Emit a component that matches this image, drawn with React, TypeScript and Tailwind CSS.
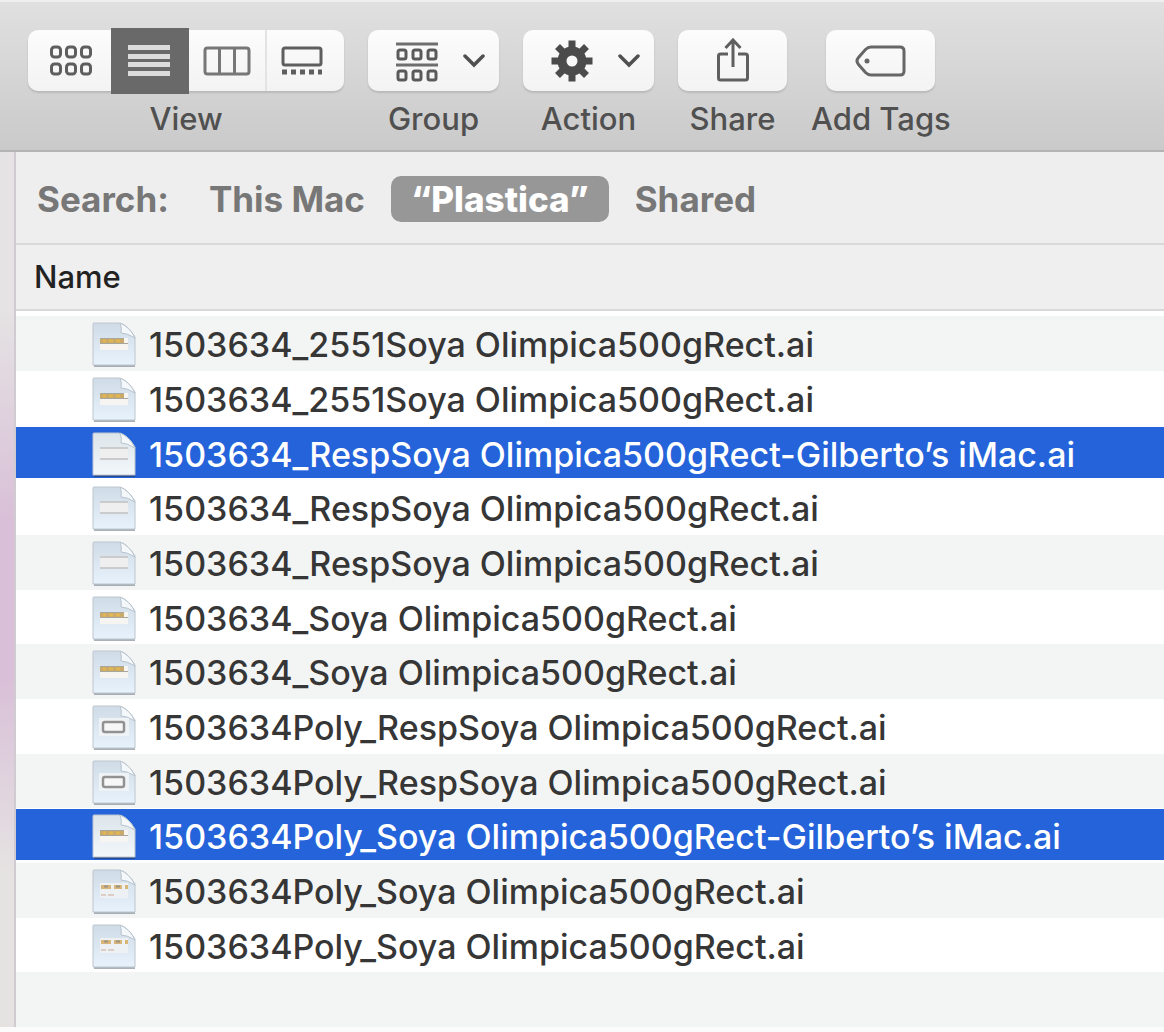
import { useState } from "react";
import type { ReactNode } from "react";

type Preview = "label" | "plain" | "frame" | "dashes";

const files: { name: string; preview: Preview; selected?: boolean }[] = [
  { name: "1503634_2551Soya Olimpica500gRect.ai", preview: "label" },
  { name: "1503634_2551Soya Olimpica500gRect.ai", preview: "label" },
  { name: "1503634_RespSoya Olimpica500gRect-Gilberto’s iMac.ai", preview: "plain", selected: true },
  { name: "1503634_RespSoya Olimpica500gRect.ai", preview: "plain" },
  { name: "1503634_RespSoya Olimpica500gRect.ai", preview: "plain" },
  { name: "1503634_Soya Olimpica500gRect.ai", preview: "label" },
  { name: "1503634_Soya Olimpica500gRect.ai", preview: "label" },
  { name: "1503634Poly_RespSoya Olimpica500gRect.ai", preview: "frame" },
  { name: "1503634Poly_RespSoya Olimpica500gRect.ai", preview: "frame" },
  { name: "1503634Poly_Soya Olimpica500gRect-Gilberto’s iMac.ai", preview: "label", selected: true },
  { name: "1503634Poly_Soya Olimpica500gRect.ai", preview: "dashes" },
  { name: "1503634Poly_Soya Olimpica500gRect.ai", preview: "dashes" },
];

function IconView() {
  return (
    <svg width="44" height="32" viewBox="0 0 44 32" fill="none" stroke="#5e5e5e" strokeWidth="3" aria-hidden="true">
      {[2, 19].map((y) =>
        [2.5, 17.5, 32.5].map((x) => <rect key={`${x}-${y}`} x={x} y={y} width="9" height="10" rx="3" />),
      )}
    </svg>
  );
}

function ListView() {
  return (
    <svg width="42" height="34" viewBox="0 0 42 34" fill="#dcdcdc" aria-hidden="true">
      {[1, 10, 18, 27].map((y) => (
        <rect key={y} x="0" y={y} width="42" height="5" />
      ))}
    </svg>
  );
}

function ColumnView() {
  return (
    <svg width="48" height="30" viewBox="0 0 48 30" fill="none" stroke="#777777" strokeWidth="3" aria-hidden="true">
      <rect x="2" y="2" width="44" height="26" rx="2.5" />
      <path d="M16.5 2v26M31.5 2v26" />
    </svg>
  );
}

function GalleryView() {
  return (
    <svg width="42" height="30" viewBox="0 0 42 30" fill="none" stroke="#5e5e5e" strokeWidth="3" aria-hidden="true">
      <rect x="2" y="2" width="38" height="17" rx="2" />
      <path d="M1 26h5M10 26h5M19 26h5M28 26h5M37 26h4" strokeWidth="5" />
    </svg>
  );
}

function GroupIcon() {
  return (
    <svg width="42" height="42" viewBox="0 0 42 42" fill="none" stroke="#5a5a5a" strokeWidth="3" aria-hidden="true">
      <path d="M0 4h42M0 25h42" stroke="#6e6e6e" />
      {[10, 31].map((y) =>
        [2, 17, 32].map((x) => <rect key={`${x}-${y}`} x={x} y={y} width="8" height="9" rx="2" />),
      )}
    </svg>
  );
}

function GearIcon() {
  return (
    <svg width="42" height="42" viewBox="-21 -21 42 42" fill="none" stroke="#4b4b4b" aria-hidden="true">
      <circle r="10" strokeWidth="9" />
      {[0, 45, 90, 135].map((a) => (
        <path key={a} d="M0 -20.5V-12M0 20.5V12" strokeWidth="7" transform={`rotate(${a})`} />
      ))}
    </svg>
  );
}

function Chevron() {
  return (
    <svg width="22" height="14" viewBox="0 0 22 14" fill="none" stroke="#505050" strokeWidth="3.5" strokeLinecap="round" aria-hidden="true">
      <path d="M2 2l9 9 9-9" />
    </svg>
  );
}

function ShareIcon() {
  return (
    <svg width="34" height="46" viewBox="0 0 34 46" fill="none" stroke="#5f5f5f" strokeWidth="3" aria-hidden="true">
      <path d="M12 16H4.5Q2.5 16 2.5 18V40Q2.5 42 4.5 42H29.5Q31.5 42 31.5 40V18Q31.5 16 29.5 16H22" />
      <path d="M17 29V2M9.5 10L17 2L24.5 10" />
    </svg>
  );
}

function TagIcon() {
  return (
    <svg width="52" height="32" viewBox="0 0 52 32" fill="none" stroke="#666666" strokeWidth="3" aria-hidden="true">
      <path d="M16 2H45Q49 2 49 6V26Q49 30 45 30H16Q13 30 10.5 27.5L3.5 19.5Q.5 16 3.5 12.5L10.5 4.5Q13 2 16 2Z" />
      <circle cx="12" cy="16" r="2.5" fill="#666666" stroke="none" />
    </svg>
  );
}

function FileIcon({ preview, selected }: { preview: Preview; selected: boolean }) {
  const id = selected ? "paper-selected" : "paper";
  return (
    <svg width="46" height="48" viewBox="0 0 46 48" className="shrink-0" aria-hidden="true">
      <defs>
        <linearGradient id={id} x1="0" y1="0" x2="0" y2="1">
          <stop offset="0" stopColor={selected ? "#dde5ea" : "#cfdbe6"} />
          <stop offset="1" stopColor={selected ? "#f2f7fb" : "#e8f2fc"} />
        </linearGradient>
      </defs>
      <path d="M3 4H30L44 18V46H3Z" fill={selected ? "#27406f" : "#8e979f"} opacity=".75" />
      <path d="M2 3Q2 2 3 2H28Q36 3 44 16V44H2Z" fill={`url(#${id})`} stroke="#bcc6cf" strokeWidth="1" />
      <path d="M29 2Q31 7 30 12Q36 12 44 17Q39 6 29 2Z" fill="#f5f8fa" stroke="#b7c3cd" strokeWidth="1" />
      {preview === "label" && (
        <>
          <rect x="9" y="17" width="28" height="12" fill="#f6f5f2" />
          <path d="M9 19.5H33" stroke="#c9aa69" strokeWidth="5" />
          <path d="M9 17.5H33M9 22.5H37" stroke="#a8a69f" strokeWidth="1" />
          <path d="M12 20h3M18 20h4M25 20h4" stroke="#e2b650" strokeWidth="3" />
        </>
      )}
      {preview === "plain" && (
        <>
          <rect x="9" y="16" width="28" height="13" fill="#efefef" />
          <path d="M9 17H37M9 28H37" stroke="#c9cbcd" strokeWidth="2" />
        </>
      )}
      {preview === "frame" && (
        <>
          <rect x="8" y="14" width="30" height="18" fill="#f0f3f6" />
          <rect x="12" y="18" width="21" height="10" rx="2" fill="#f7f7f7" stroke="#929292" strokeWidth="2.5" />
        </>
      )}
      {preview === "dashes" && (
        <>
          <rect x="9" y="15" width="28" height="15" fill="#eef1f4" />
          <path d="M10 19H20M23 19H31M34 19H37" stroke="#d8b67a" strokeWidth="4" />
          <path d="M13 18.5h4M25 18.5h4" stroke="#9b9384" strokeWidth="2" />
          <path d="M10 27H15M17 27H23" stroke="#dccdc8" strokeWidth="2" />
        </>
      )}
    </svg>
  );
}

const raised = "bg-gradient-to-b from-[#fcfcfc] to-[#f3f3f3] shadow-[0_2px_2px_#b9b9b9]";

function ToolbarItem({ label, children }: { label: string; children: ReactNode }) {
  return (
    <div className="flex flex-col items-center gap-2">
      {children}
      <span className="text-[31px] leading-10 font-medium whitespace-nowrap text-[#505050]">{label}</span>
    </div>
  );
}

const views = [
  { name: "Icons", icon: <IconView />, size: "w-[83px] rounded-l-[10px] pl-[2px]" },
  { name: "List", icon: <ListView />, size: "w-[78px] pr-[2px]" },
  { name: "Columns", icon: <ColumnView />, size: "w-[76px]" },
  { name: "Gallery", icon: <GalleryView />, size: "w-[79px] rounded-r-[10px] border-l-2 border-[#e3e3e3] pr-2" },
];

function Toolbar() {
  const [view, setView] = useState("List");
  return (
    <header className="flex items-start gap-6 border-t-2 border-b-2 border-t-[#efefef] border-b-[#b3b3b3] bg-gradient-to-b from-[#e0e0e0] to-[#cacaca] px-7 pt-7 pb-[11px]">
      <ToolbarItem label="View">
        <div role="group" aria-label="View" className={`flex h-[61px] items-center rounded-[10px] ${raised}`}>
          {views.map((v) => (
            <button
              key={v.name}
              type="button"
              aria-label={v.name}
              aria-pressed={view === v.name}
              onClick={() => setView(v.name)}
              className={`flex items-center justify-center ${v.size} ${view === v.name ? "h-[66px] bg-[#696969]" : "h-full"}`}
            >
              {v.icon}
            </button>
          ))}
        </div>
      </ToolbarItem>
      <ToolbarItem label="Group">
        <button type="button" aria-label="Group" className={`flex h-[61px] w-[131px] items-center justify-between rounded-[10px] pr-[14px] pl-7 ${raised}`}>
          <GroupIcon />
          <Chevron />
        </button>
      </ToolbarItem>
      <ToolbarItem label="Action">
        <button type="button" aria-label="Action" className={`flex h-[61px] w-[131px] items-center justify-between rounded-[10px] pr-[14px] pl-7 ${raised}`}>
          <GearIcon />
          <Chevron />
        </button>
      </ToolbarItem>
      <ToolbarItem label="Share">
        <button type="button" aria-label="Share" className={`flex h-[61px] w-[109px] items-center justify-center rounded-[10px] ${raised}`}>
          <ShareIcon />
        </button>
      </ToolbarItem>
      <ToolbarItem label="Add Tags">
        <button type="button" aria-label="Add Tags" className={`flex h-[61px] w-[109px] items-center justify-center rounded-[10px] ${raised}`}>
          <TagIcon />
        </button>
      </ToolbarItem>
    </header>
  );
}

function FileRow({ name, preview, selected = false }: { name: string; preview: Preview; selected?: boolean }) {
  return (
    <tr
      aria-selected={selected}
      className={`h-[55px] nth-[3n]:h-[54px] ${selected ? "bg-[#fbfdff]" : "odd:bg-[#f3f5f5] even:bg-white"}`}
    >
      <td className="p-0 pt-px align-top">
        <div
          className={`flex h-[51px] items-center gap-3 pt-1 pl-[75px] whitespace-nowrap ${selected ? "bg-[#2463da] text-white" : "text-[#363636]"}`}
        >
          <FileIcon preview={preview} selected={selected} />
          {name}
        </div>
      </td>
    </tr>
  );
}

export default function App() {
  return (
    <div className="min-h-screen overflow-hidden bg-[#fbfbfb] font-[Inter,sans-serif]">
      <Toolbar />
      <div className="flex">
        <aside className="w-4 shrink-0 border-r-2 border-[#d0cbd0] bg-[linear-gradient(#e5e3e3_18%,#d9c0d8_42%,#d9c0d8_60%,#e5e2e2_82%)]" />
        <main className="min-w-0 grow bg-white">
          <nav aria-label="Search scope" className="flex h-[93px] items-center border-b-2 border-[#d9d9d9] bg-[#eeeeee] px-[21px] pt-[3px] text-[35px] font-bold text-[#777777]">
            <span>Search:</span>
            <button type="button" className="ml-10">This Mac</button>
            <button type="button" aria-pressed="true" className="ml-[26px] flex h-[46px] items-center rounded-[10px] bg-[#979797] px-5 font-extrabold text-white">
              “Plastica”
            </button>
            <button type="button" className="ml-[26px]">Shared</button>
          </nav>
          <table className="w-full border-collapse text-[34px] leading-10 font-medium">
            <thead>
              <tr>
                <th scope="col" className="h-[65px] border-b-2 border-[#d9d9d9] bg-[#efefef] px-[18px] text-left text-[31px] font-medium text-[#222222]">
                  Name
                </th>
              </tr>
            </thead>
            <tbody className="before:block before:h-[5px]">
              {files.map((file, i) => (
                <FileRow key={i} {...file} />
              ))}
            </tbody>
          </table>
          <div className="h-[55px] bg-[#f3f5f5]" />
        </main>
      </div>
    </div>
  );
}
